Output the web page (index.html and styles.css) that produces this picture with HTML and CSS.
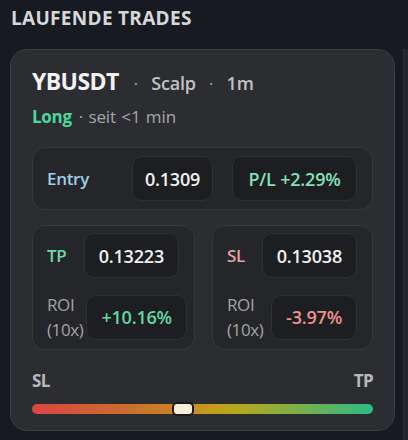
FILE: index.html
```html
<!DOCTYPE html>
<html lang="de">
<head>
<meta charset="utf-8">
<link rel="stylesheet" href="styles.css">
</head>
<body>
<div class="page">
  <h2 class="title">LAUFENDE TRADES</h2>
  <div class="row-cards">
    <div class="card">
      <div class="head">
        <span class="sym">YBUSDT</span>
        <span class="sep">·</span>
        <span class="meta">Scalp</span>
        <span class="sep">·</span>
        <span class="meta">1m</span>
      </div>
      <div class="sub">
        <span class="long">Long</span>
        <span class="since">· seit &lt;1 min</span>
      </div>
      <div class="box entry">
        <span class="lbl-entry">Entry</span>
        <span class="chip chip-entry">0.1309</span>
        <span class="chip chip-pl">P/L +2.29%</span>
      </div>
      <div class="levels">
        <div class="box level">
          <div class="lrow">
            <span class="lbl tp">TP</span>
            <span class="chip val">0.13223</span>
          </div>
          <div class="lrow">
            <span class="lbl roi">ROI<br>(10x)</span>
            <span class="chip val pos">+10.16%</span>
          </div>
        </div>
        <div class="box level">
          <div class="lrow">
            <span class="lbl sl">SL</span>
            <span class="chip val">0.13038</span>
          </div>
          <div class="lrow">
            <span class="lbl roi">ROI<br>(10x)</span>
            <span class="chip val neg">-3.97%</span>
          </div>
        </div>
      </div>
      <div class="range">
        <div class="range-labels"><span>SL</span><span>TP</span></div>
        <div class="bar">
          <span class="thumb" style="left: 44.4%"></span>
        </div>
      </div>
    </div>
    <div class="card-next"></div>
  </div>
</div>
</body>
</html>
```
FILE: styles.css
```css
html, body {
  margin: 0;
  padding: 0;
  background: #171a21;
  overflow: hidden;
}
body {
  width: 408px;
  height: 440px;
  font-family: "Open Sans", "Noto Sans", sans-serif;
  color: #e8e8e8;
}
.page {
  padding: 6px 0 0 10px;
}
.title {
  margin: 0 0 0 1px;
  font-size: 19px;
  line-height: 24px;
  font-weight: 700;
  color: #d7d7d9;
  letter-spacing: 0.3px;
}
.row-cards {
  display: flex;
  gap: 8px;
  margin-top: 19px;
}
.card {
  flex: none;
  width: 385px;
  height: 382px;
  box-sizing: border-box;
  background: #2c2d31;
  border: 1px solid #3d3e43;
  border-radius: 17px;
  padding: 16px 21px 0 21px;
  display: flex;
  flex-direction: column;
}
.card-next {
  flex: none;
  width: 5px;
  height: 400px;
  background: #22252c;
  border-left: 1px solid #2c2f36;
  box-sizing: border-box;
}
.head {
  display: flex;
  align-items: baseline;
  gap: 13px;
  line-height: 30px;
}
.sym {
  font-size: 23px;
  font-weight: 700;
  color: #f2f2f3;
  letter-spacing: -0.6px;
  margin-right: 2px;
}
.sep {
  color: #9c9c9f;
  font-size: 18px;
}
.meta {
  font-size: 18px;
  font-weight: 600;
  color: #c2c2c5;
  letter-spacing: -0.2px;
}
.sub {
  display: flex;
  align-items: baseline;
  gap: 7px;
  line-height: 22px;
  margin-top: 8px;
}
.long {
  color: #4fd69c;
  font-weight: 700;
  font-size: 17px;
  letter-spacing: -0.3px;
}
.since {
  color: #a6a6aa;
  font-size: 17px;
  letter-spacing: -0.1px;
  word-spacing: 1px;
}
.box {
  box-sizing: border-box;
  background: #252629;
  border: 1px solid #37383d;
  border-radius: 13px;
}
.entry {
  margin-top: 19px;
  height: 63px;
  flex: none;
  display: flex;
  align-items: center;
  padding: 0 15px 0 14px;
}
.lbl-entry {
  flex: 1;
  color: #9fcbe6;
  font-size: 17px;
  font-weight: 600;
  letter-spacing: -0.3px;
}
.chip {
  box-sizing: border-box;
  height: 45px;
  display: flex;
  align-items: center;
  justify-content: center;
  background: #1d1e21;
  border: 1px solid #2f3034;
  border-radius: 10px;
  font-size: 18px;
  font-weight: 600;
  color: #f1f1f1;
  letter-spacing: -0.2px;
  white-space: nowrap;
  flex: none;
}
.chip-entry {
  width: 81px;
}
.chip-pl {
  width: 125px;
  margin-left: 19px;
  color: #82e2b4;
}
.levels {
  display: grid;
  grid-template-columns: 163px 161px;
  gap: 17px;
  margin-top: 15px;
  flex: none;
}
.level {
  height: 125px;
  padding: 7px 15px 0 14px;
  display: flex;
  flex-direction: column;
  gap: 14px;
}
.lrow {
  display: flex;
  align-items: center;
  justify-content: space-between;
  gap: 3px;
}
.val {
  padding: 0 14px;
}
.lbl {
  font-size: 17px;
  font-weight: 600;
  letter-spacing: -0.3px;
}
.tp { color: #6fd6a9; }
.sl { color: #e9a3a3; }
.roi {
  font-weight: 400;
  color: #a3a3a7;
  line-height: 25px;
  font-size: 17px;
  letter-spacing: -0.4px;
}
.pos { color: #5fd9a1; }
.neg { color: #f08e8e; }
.range {
  margin-top: 21px;
}
.range-labels {
  display: flex;
  justify-content: space-between;
  font-size: 17px;
  font-weight: 700;
  color: #b8b8bb;
  line-height: 20px;
  letter-spacing: -0.6px;
}
.bar {
  position: relative;
  margin-top: 13px;
  height: 10px;
  border-radius: 5px;
  background: linear-gradient(90deg, #dc4541 0%, #cf5c36 15%, #c9712d 30%, #c98424 42%, #c49a1d 52%, #b5a81f 60%, #8fad3a 72%, #5fb25e 86%, #2dbd86 100%);
}
.thumb {
  position: absolute;
  top: -2px;
  width: 22px;
  height: 14px;
  margin-left: -11px;
  box-sizing: border-box;
  background: #f5efd9;
  border: 2px solid #1a1a1a;
  border-radius: 5px;
}
```
